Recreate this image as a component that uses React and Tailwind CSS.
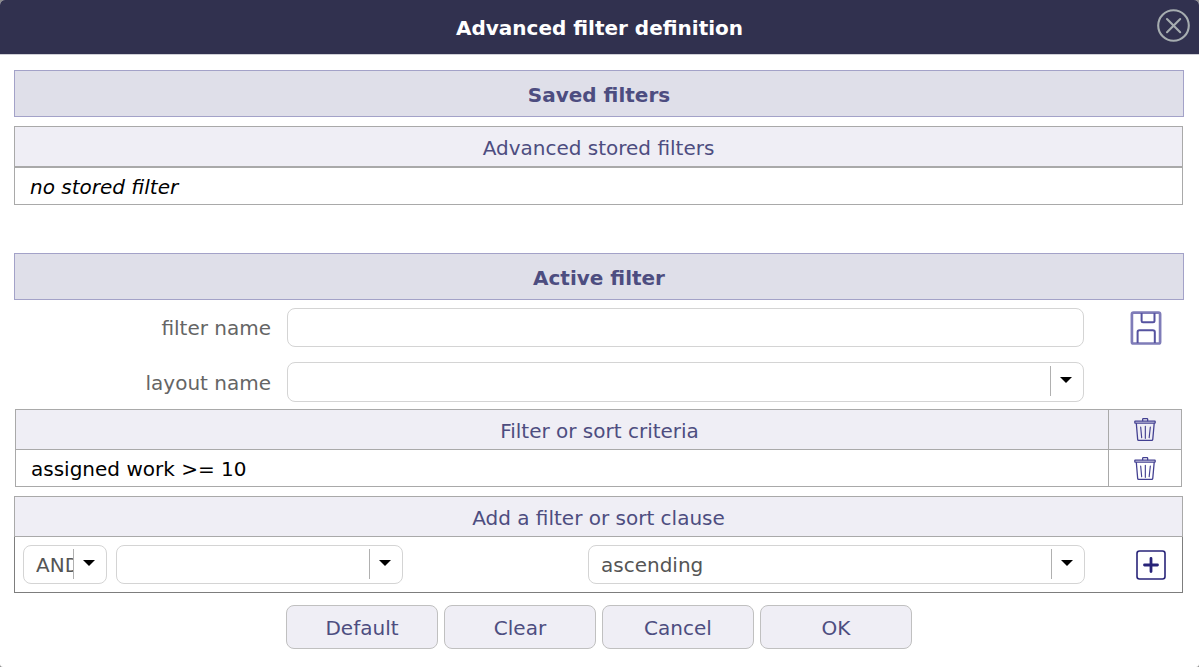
import React from "react";

function CloseIcon() {
  return (
    <svg width="34" height="34" viewBox="0 0 34 34" fill="none" stroke="#a6adb0" strokeWidth="2.1" strokeLinecap="round" aria-hidden="true">
      <circle cx="16.500" cy="16.500" r="15.3" />
      <path d="M10 10 23.200 23.200M23.200 10 10 23.200" />
    </svg>
  );
}

function SaveIcon() {
  return (
    <svg width="32" height="34" viewBox="0 0 32 34" fill="none" stroke="#5653a0" strokeLinejoin="round" aria-hidden="true">
      <rect x="1.9" y="1.7" width="28.2" height="30.8" rx="1.6" stroke="#7f7cb8" strokeWidth="2.7" />
      <path d="M11.6 2V9.8Q11.6 11.3 13 11.3H23Q24.500 11.3 24.500 9.8V2" strokeWidth="2" />
      <path d="M7.6 32V21Q7.6 19.200 9.4 19.200H22.8Q24.800 19.200 24.800 21V32" strokeWidth="2" />
    </svg>
  );
}

function TrashIcon() {
  return (
    <svg width="22" height="23" viewBox="0 0 66 69" fill="none" stroke="#423f91" strokeWidth="3.8" strokeLinejoin="round" strokeLinecap="round" aria-hidden="true">
      <path d="M26 8V3.500Q26 2 28 2H39Q41 2 41 3.500V8" />
      <rect x="2.500" y="9.500" width="61" height="6" rx="1" />
      <path d="M7 17 11 64Q11.200 67 14 67H53Q56 67 56.300 64L60.500 17" />
      <path d="M20 27 23 59M34 25V61M49 27 45.500 59" strokeWidth="3.4" />
    </svg>
  );
}

function PlusIcon() {
  return (
    <svg width="30" height="30" viewBox="0 0 30 30" fill="none" stroke="#272378" aria-hidden="true">
      <rect x="1" y="1" width="28" height="28" rx="2.500" strokeWidth="1.600" />
      <path d="M15 8.500V21.500M8.500 15H21.500" strokeWidth="2.800" strokeLinecap="round" />
    </svg>
  );
}

function SelectBox({ label, id, options, className }) {
  return (
    <div className={`relative min-w-0 ${className}`}>
      <select
        id={id}
        aria-label={label}
        className="block h-full w-full appearance-none rounded-lg border border-[#d4d4d4] bg-white pr-8 pl-3 text-xl text-[#555555]"
      >
        {options.map((option) => (
          <option key={option}>{option}</option>
        ))}
      </select>
      <span className="pointer-events-none absolute top-1 right-px flex h-[30px] w-[33px] rounded-r-lg border-l border-[#b0b0b0] bg-white pt-[11px] pl-[9px]">
        <svg width="12" height="6" viewBox="0 0 12 6" aria-hidden="true">
          <path d="M0 0H12L6 6Z" fill="#000" />
        </svg>
      </span>
    </div>
  );
}

function SectionTitle({ children }) {
  return (
    <h2 className="flex h-[47px] items-center justify-center border border-[#a3a2c8] bg-[#dfdfe9] pt-0.5 text-xl font-bold text-[#4d4d80]">
      {children}
    </h2>
  );
}

const headCell = "border border-[#a9a9a9] bg-[#efeef5] text-center font-normal text-[#4d4d80]";

export default function App() {
  return (
    <div className="min-h-screen bg-[#8c8c8c] text-xl text-black" style={{ fontFamily: '"DejaVu Sans", Verdana, sans-serif' }}>
      <main className="min-h-screen overflow-hidden rounded-t-[5px] rounded-b-[3px] bg-white">
        <header className="relative flex h-[55px] items-center justify-center border-b border-[#cfcfd6] bg-[#31314f] pt-0.5">
          <h1 className="text-xl font-bold text-white">Advanced filter definition</h1>
          <button type="button" aria-label="Close" className="absolute top-[9px] right-2">
            <CloseIcon />
          </button>
        </header>

        <div className="pt-[15px] pr-[15px] pl-[14px]">
          <SectionTitle>Saved filters</SectionTitle>

          <div className="mt-[9px] mr-px">
            <table className="w-full border-separate border-spacing-0">
              <thead>
                <tr className="h-[41px]">
                  <th className={`${headCell} pt-0.5`}>Advanced stored filters</th>
                </tr>
              </thead>
              <tbody>
                <tr className="h-[38px]">
                  <td className="border border-[#a9a9a9] px-[15px] pt-0.5 italic">no stored filter</td>
                </tr>
              </tbody>
            </table>
          </div>

          <div className="mt-12">
            <SectionTitle>Active filter</SectionTitle>
          </div>

          <div className="mt-2 flex items-center">
            <label htmlFor="filter-name" className="w-[257px] text-right text-[#656565]">filter name</label>
            <input id="filter-name" type="text" className="ml-4 h-[39px] min-w-0 flex-1 rounded-lg border border-[#d4d4d4] px-3" />
            <div className="ml-6 flex w-[76px] justify-center">
              <button type="button" aria-label="Save filter"><SaveIcon /></button>
            </div>
          </div>

          <div className="mt-[15px] flex items-center pr-[100px]">
            <label htmlFor="layout-name" className="w-[257px] pt-0.5 text-right text-[#656565]">layout name</label>
            <SelectBox id="layout-name" options={[""]} className="ml-4 h-10 flex-1" />
          </div>

          <div className="mt-[7px] mr-0.5 ml-px">
            <table className="w-full table-fixed border-collapse">
              <colgroup>
                <col />
                <col className="w-[73px]" />
              </colgroup>
              <thead>
                <tr className="h-10">
                  <th className={`${headCell} pt-0.5 pl-[75px]`}>Filter or sort criteria</th>
                  <th className={headCell}>
                    <button type="button" aria-label="Remove all criteria" className="mx-auto block"><TrashIcon /></button>
                  </th>
                </tr>
              </thead>
              <tbody>
                <tr className="h-[37px]">
                  <td className="border border-[#a9a9a9] px-[15px] pt-0.5">assigned work &gt;= 10</td>
                  <td className="border border-[#a9a9a9]">
                    <button type="button" aria-label="Remove criterion" className="mx-auto block"><TrashIcon /></button>
                  </td>
                </tr>
              </tbody>
            </table>
          </div>

          <section className="mt-[9px] mr-px">
            <h3 className="flex h-[41px] items-center justify-center border border-[#a9a9a9] bg-[#efeef5] pt-0.5 text-[#4d4d80]">
              Add a filter or sort clause
            </h3>
            <div className="grid h-14 grid-cols-[84px_287fr_167fr_497fr_80px] items-center gap-[9px] border-x border-b border-[#7d7d7d] px-2">
              <SelectBox label="Logical operator" options={["AND", "OR"]} className="h-[39px]" />
              <SelectBox label="Field" options={[""]} className="h-[39px]" />
              <span />
              <SelectBox label="Sort order" options={["ascending", "descending"]} className="h-[39px]" />
              <button type="button" aria-label="Add clause" className="mr-2 justify-self-end"><PlusIcon /></button>
            </div>
          </section>

          <footer className="flex justify-center gap-1.5 pt-3 pb-4">
            {["Default", "Clear", "Cancel", "OK"].map((name) => (
              <button key={name} type="button" className="h-11 w-[152px] rounded-lg border border-[#c0c0c0] bg-[#efeef5] pt-0.5 text-[#4d4d80]">
                {name}
              </button>
            ))}
          </footer>
        </div>
      </main>
    </div>
  );
}
